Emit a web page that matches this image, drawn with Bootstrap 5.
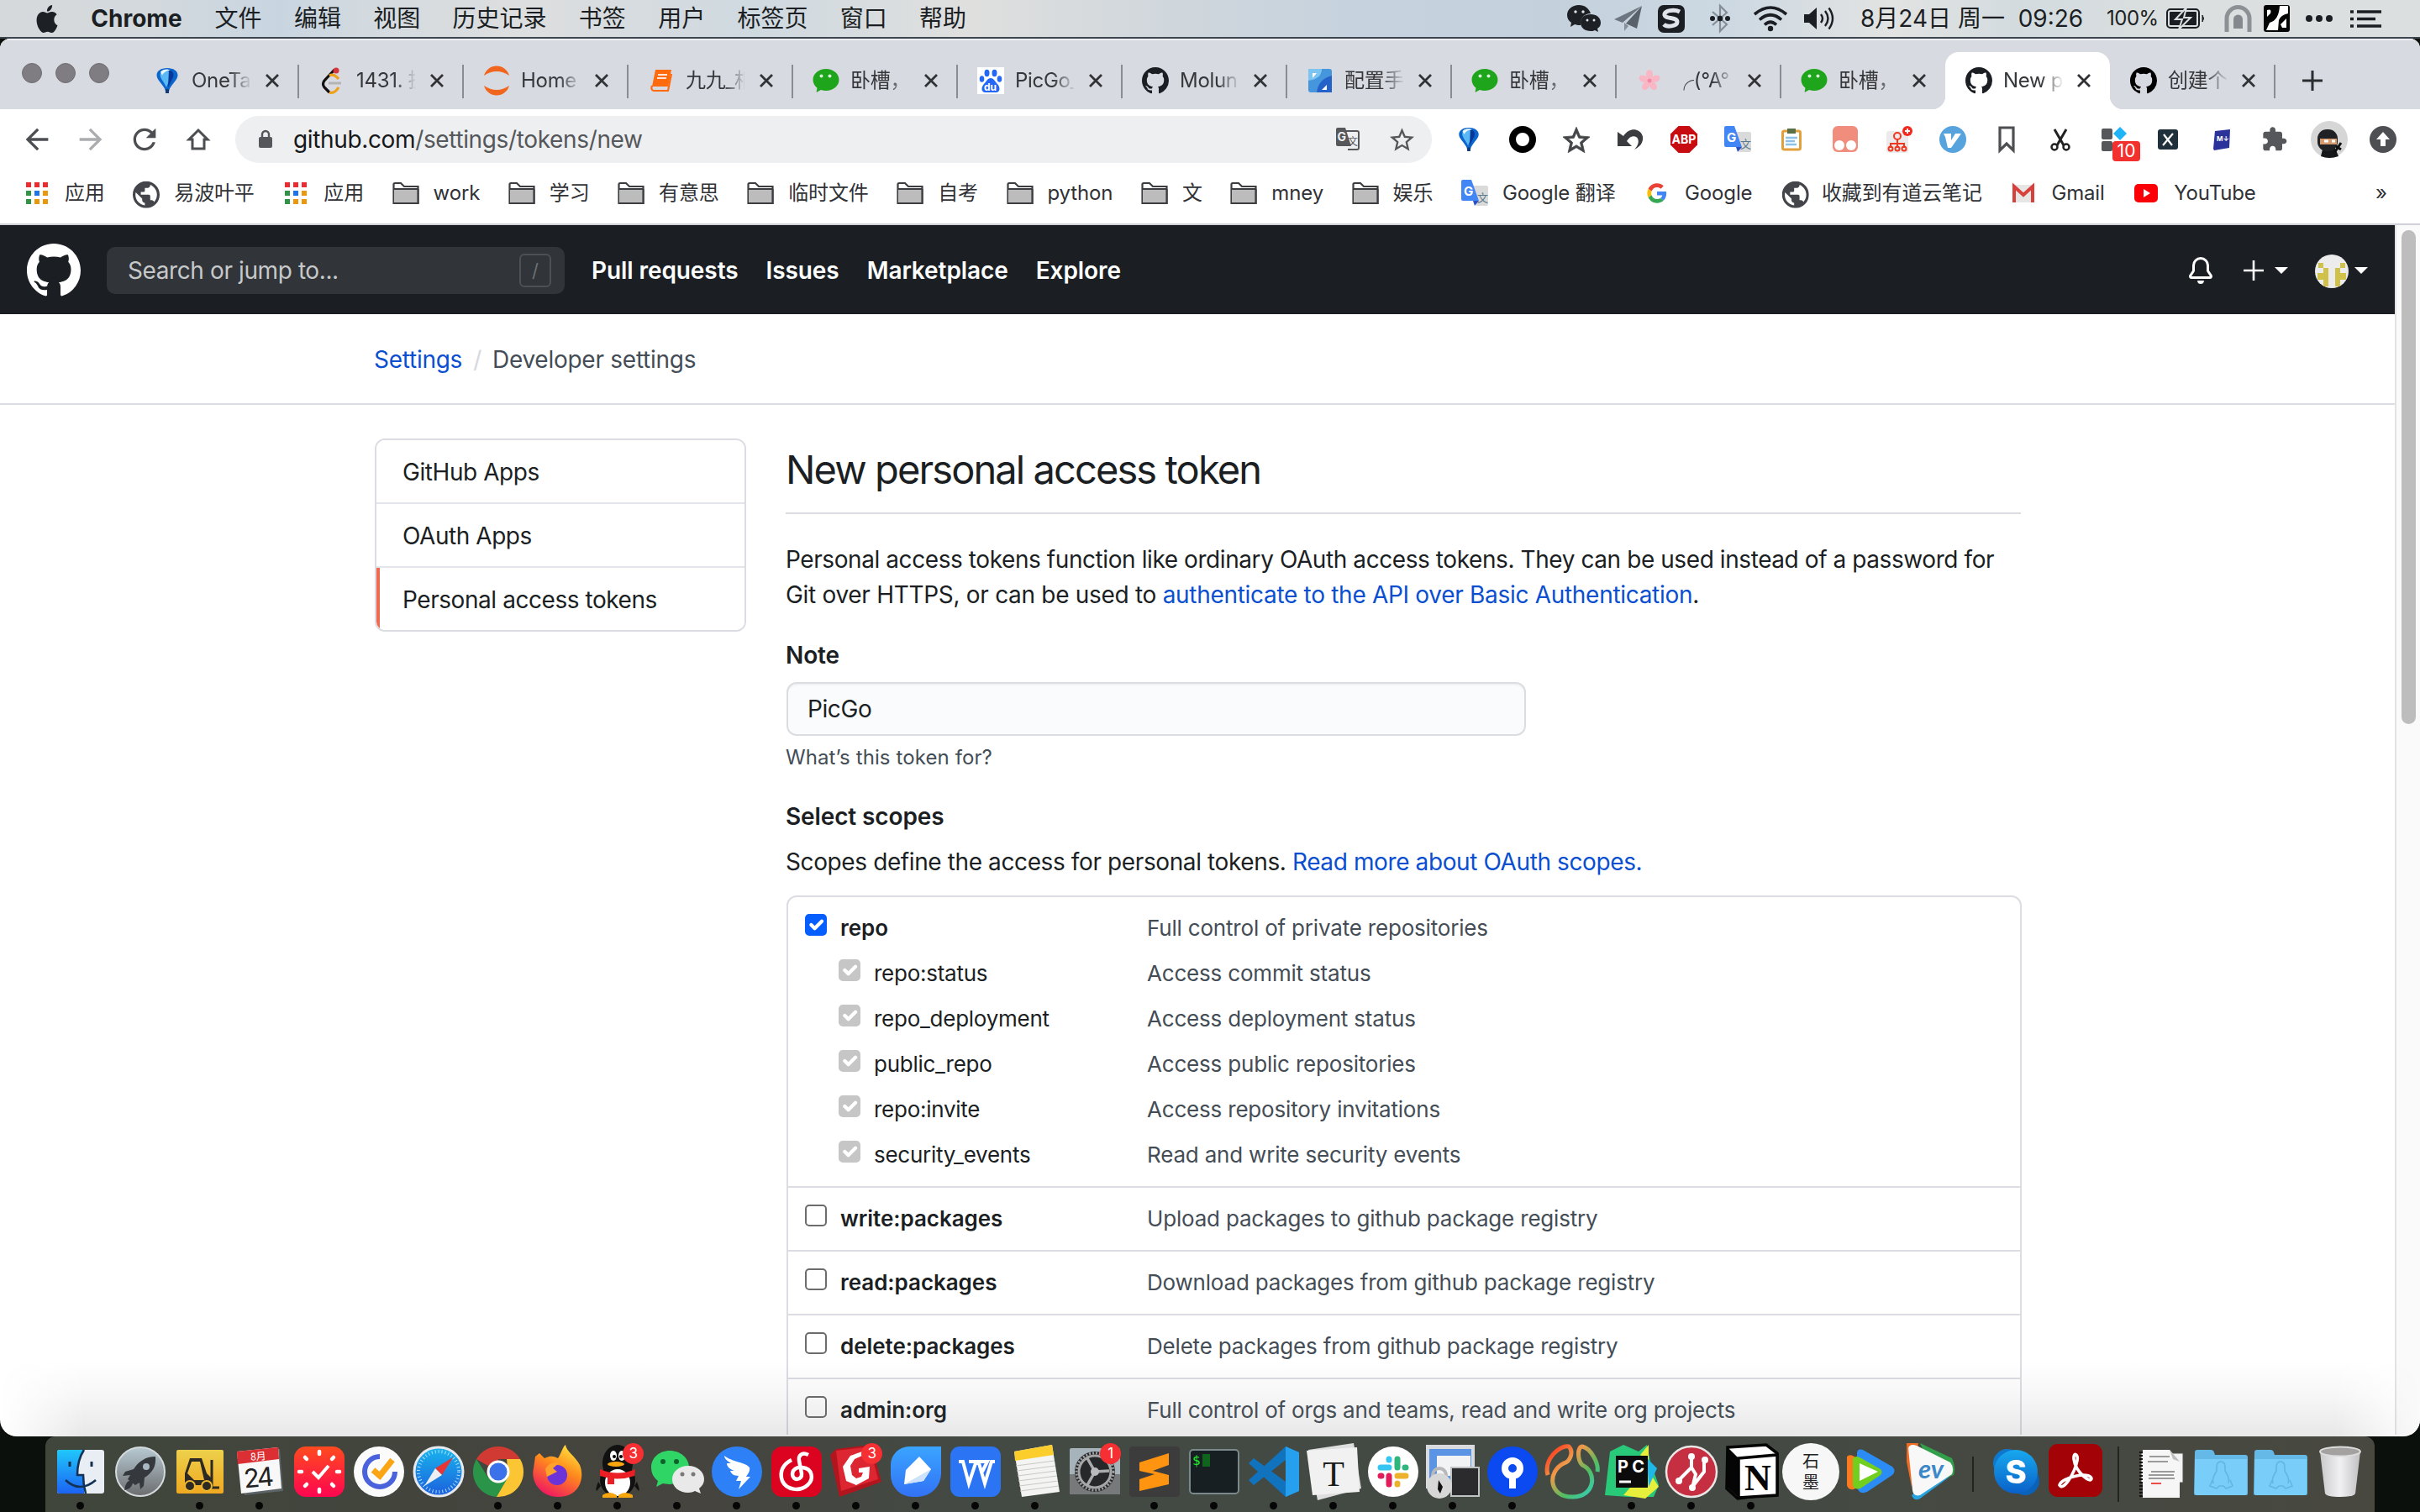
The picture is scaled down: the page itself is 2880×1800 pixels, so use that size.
<!DOCTYPE html>
<html lang="zh-CN">
<head>
<meta charset="utf-8">
<title>New personal access token</title>
<link href="https://cdn.jsdelivr.net/npm/bootstrap@5.3.0/dist/css/bootstrap.min.css" rel="stylesheet">
<style>
html,body{width:2880px;height:1800px;overflow:hidden}
body{font-family:Inter,"Noto Sans CJK SC",sans-serif;font-size:28px;line-height:42px;color:#1b1f23;background:#0b100d}
svg{display:block;flex:none;overflow:visible}
a{text-decoration:none;color:#0a4fd0}
.desktop{width:2880px;height:1800px}
/* system menu bar */
.sysbar{height:46px;padding-bottom:0;background:linear-gradient(90deg,#d6d9db 0,#d3d9dd 180px,#c8d5e0 330px,#d3dadf 440px,#dddedf 620px,#cfd9e0 900px,#dfdfde 1150px,#d2d8dc 1350px,#c6d2dd 1600px,#c4d0db 1850px,#ccd8e2 2050px,#e2e3e2 2250px,#d3dbdf 2400px,#dbdfdf 2600px,#dcdfe0 100%);border-bottom:2px solid #3d464f;white-space:nowrap}
.sysmenu{gap:38.3px;padding-left:42px}
.sysmenu b{font-weight:700;letter-spacing:0;width:109px;margin:0}
.systray{padding-right:46px}
/* browser window */
.win{height:1664px;border-radius:12px 12px 20px 20px;overflow:hidden;background:#fff;position:relative}
.tabstrip{height:84px;background:#d8dae1;border-top:2px solid #eceef1}
.lights{width:159px;padding:27px 0 0 26px;gap:16px}
.lights i{width:24px;height:24px;border-radius:50%;background:#7f7d82;border:1px solid #706e73}
.ctab{width:196px;height:68px;margin-top:14px;padding:0 17px 0 24px;position:relative;font-size:24px;color:#35373b}
.ctab::after{content:"";position:absolute;right:-1px;top:15px;width:2px;height:40px;background:#8a8c92}
.ctab .lbl{width:70px;margin-left:13px;overflow:hidden;white-space:nowrap;letter-spacing:-.3px;-webkit-mask-image:linear-gradient(90deg,#000 45px,transparent 72px);mask-image:linear-gradient(90deg,#000 45px,transparent 72px)}
.ctab .shut{margin-left:16px}
.ctab.live{background:#fff;border-radius:16px 16px 0 0}
.ctab.live::after,.ctab.prelive::after{display:none}
.ctab.live::before{content:"";position:absolute;left:-16px;right:-16px;bottom:0;height:16px;background:radial-gradient(circle at 0 0,transparent 16px,#fff 16.5px) left/16px 16px no-repeat,radial-gradient(circle at 100% 0,transparent 16px,#fff 16.5px) right/16px 16px no-repeat}
.toolrow{height:72px;padding-left:12px}
.cell64{width:64px;height:72px;display:flex;align-items:center;justify-content:center;flex:none;position:relative}
.omni{width:1424px;height:56px;border-radius:28px;background:#eeeff1;margin-left:12px;margin-right:12px;padding:0 4px 0 28px}
.omni .addr{margin-left:25px;font-size:28px;letter-spacing:-.36px;color:#55575b}
.omni .addr span{color:#17181a}
.marks{height:66px;border-bottom:2px solid #cfd0d8;font-size:24px;color:#303236;gap:33.6px;padding-left:28px;white-space:nowrap;padding-bottom:9px}
.marks .bm{display:flex;align-items:center;gap:17px;letter-spacing:-.15px}
.marks .bm svg{width:32px;height:32px}
.badge10{position:absolute;left:30px;top:38px;width:33px;height:24px;border-radius:4px;background:#f2302e;color:#fff;font-size:21px;line-height:24px;text-align:center}
/* page */
.ghpage{width:2850px;height:1440px;overflow:hidden}
.ghtop{height:106px;background:#1b1f24;padding:2px 32px 0 32px}
.ghsearch{width:545px;height:56px;border-radius:10px;background:#313438;color:#c6c8ca;margin-left:31px;padding:0 16px 0 25px;letter-spacing:-.1px}
.ghsearch .hintword{letter-spacing:-.4px}
.slashkey{width:38px;height:40px;border:2px solid #4d5155;border-radius:6px;color:#6c7074;font-size:22px;line-height:36px;text-align:center}
.ghlinks{margin-left:32px;gap:33px;font-weight:600;color:#fff;letter-spacing:-.08px}
.caret{border:8px solid transparent;border-top-color:#fff;border-bottom:0;width:0;height:0}
.crumbs{height:108px;border-bottom:2px solid #dcdde3;padding-left:445px;padding-top:1px;letter-spacing:-.26px}
.crumbs .sl{color:#d5d8dd;margin:0 13px}
.sidemenu{width:442px;height:230px;border:2px solid #dcdde3;border-radius:12px;overflow:hidden;margin-left:446px;margin-top:40px;flex:none}
.sidemenu .list-group-item{height:76px;padding:0 0 0 31px;line-height:76px;border:0;border-bottom:2px solid #e4e5ea;border-radius:0;color:#1b1f23;letter-spacing:-.44px}
.sidemenu .list-group-item:last-child{border-bottom:0;height:74px;border-left:4px solid #ee6a50;padding-left:27px}
.maincol{width:1470px;margin-left:47px;margin-top:40px;flex:none;letter-spacing:-.3px}
.maincol h2{font-size:47px;font-weight:400;line-height:74px;height:90px;border-bottom:2px solid #dcdde3;margin:0;letter-spacing:-1.9px}
.maincol p{margin:0;white-space:nowrap}
.maincol .tightline{letter-spacing:-.42px}
.maincol .snug{letter-spacing:-.39px}
.fieldname{font-weight:600;line-height:42px;letter-spacing:-.12px}
.notebox{width:880px;height:64px;padding:0 23px;border:2px solid #dadde2;border-radius:12px;background:#fafbfc;font-size:28px;color:#1b1f23;box-shadow:inset 0 2px 0 rgba(27,31,35,.04);margin-left:1px;letter-spacing:-.4px}
.hint{font-size:24px;line-height:36px;color:#444d56;letter-spacing:.1px}
.scopebox{border:2px solid #dcdde3;border-radius:12px;height:800px;margin-left:1px;width:1470px;font-size:26px;line-height:40px;letter-spacing:-.26px}
.scopeset{height:76px;border-bottom:2px solid #dcdde3;padding:17px 0 0 20px}
.scopeset.tall{height:346px}
.scoperow{height:54px;align-items:flex-start}
.scoperow .form-check-input{width:26px;height:26px;margin:3px 16px 0 0;border:2px solid #6c6c6e;border-radius:5px;flex:none}
.scoperow .form-check-input:checked{background-color:#075eff;border-color:#075eff;background-size:128%}
.scoperow .form-check-input:disabled{opacity:1;background-color:#c6c6c6;border-color:#c6c6c6}
.scoperow .kid{padding-left:40px;opacity:1!important}
.scoperow .kid,.scoperow .top{width:407px;display:flex}
.scoperow .top{font-weight:600;letter-spacing:-.05px}
.scoperow .what{color:#444d56;letter-spacing:-.19px}
.scroller{width:30px;height:1440px;border-left:2px solid #e3e3e4;background:#fafafa;padding:6px 0 0 6px}
.scroller i{display:block;width:17px;height:588px;border-radius:9px;background:#bdbdbd}
.dockshade{position:absolute;left:0;right:0;bottom:0;height:90px;background:linear-gradient(180deg,rgba(90,90,90,0) 0,rgba(90,90,90,.05) 45%,rgba(90,90,90,.14) 100%);-webkit-mask-image:linear-gradient(90deg,transparent 0,#000 100px,#000 2780px,transparent 100%);mask-image:linear-gradient(90deg,transparent 0,#000 100px,#000 2780px,transparent 100%)}
/* dock */
.dockwrap{height:90px;background:#0b100d}
.dock{width:2772px;height:90px;margin-left:54px;padding-left:6px;border-radius:12px 12px 0 0;background:linear-gradient(90deg,#40463c,#45443e 28%,#434a43 40%,#434a43 70%,#484840)}
.app{width:71.02px;height:90px;flex:none;display:flex;flex-direction:column;align-items:center;padding-top:10px;position:relative}
.app svg{width:64px;height:64px}
.app.on::after{content:"";position:absolute;left:31px;top:78px;width:9px;height:9px;border-radius:50%;background:#060606}
.appnum{position:absolute;left:42px;top:8px;width:25px;height:25px;border-radius:50%;background:#f52f32;color:#fff;font-size:17px;line-height:25px;text-align:center}
.dsep{width:31px;height:90px;display:flex;justify-content:center;align-items:center}
.dsep i{width:2px;height:42px;background:#22241f}
.dsep i.tallsep{height:66px}
</style>
</head>
<body>
<svg width="0" height="0" class="position-absolute">
<defs>
<symbol id="gh" viewBox="0 0 16 16"><path d="M8 0C3.58 0 0 3.58 0 8c0 3.54 2.29 6.53 5.47 7.59.4.07.55-.17.55-.38 0-.19-.01-.82-.01-1.49-2.01.37-2.53-.49-2.69-.94-.09-.23-.48-.94-.82-1.13-.28-.15-.68-.52-.01-.53.63-.01 1.08.58 1.23.82.72 1.21 1.87.87 2.33.66.07-.52.28-.87.51-1.07-1.78-.2-3.64-.89-3.64-3.95 0-.87.31-1.59.82-2.15-.08-.2-.36-1.02.08-2.12 0 0 .67-.21 2.2.82.64-.18 1.32-.27 2-.27.68 0 1.36.09 2 .27 1.53-1.04 2.2-.82 2.2-.82.44 1.1.16 1.92.08 2.12.51.56.82 1.27.82 2.15 0 3.07-1.87 3.75-3.65 3.95.29.25.54.73.54 1.48 0 1.07-.01 1.93-.01 2.2 0 .21.15.46.55.38A8.013 8.013 0 0016 8c0-4.42-3.58-8-8-8z"/></symbol>
<symbol id="x" viewBox="0 0 20 20"><path d="M3 3l14 14M17 3L3 17" stroke="#303236" stroke-width="2.8"/></symbol>
<symbol id="wx" viewBox="0 0 32 32"><path d="M16 2C7.5 2 0.5 7.6 0.5 15c0 4 2 7.300 5 9.700L4.500 30l5.500-3c2 .6 4 .9 6 .9 8.500 0 15.500-5.600 15.500-13S24.500 2 16 2z" fill="#1fa51b"/><circle cx="10.500" cy="10.500" r="2" fill="#d8f2d6"/><circle cx="20.500" cy="10.500" r="2" fill="#d8f2d6"/></symbol>
<symbol id="folder" viewBox="0 0 32 32"><path d="M1.500 28V5.500Q1.500 4 3 4H10L14 8H30.500V28Z" fill="#fff" stroke="#3c3d40" stroke-width="2.200"/><path d="M2 12h28v15.500H2z" fill="#bcbcbc"/><path d="M1 11h30" stroke="#3c3d40" stroke-width="2"/><path d="M1.500 28h29V11" stroke="#3c3d40" stroke-width="2.200" fill="none"/></symbol>
<symbol id="grid9" viewBox="0 0 32 32"><g fill="#ee2a2e"><path d="M3 3h6v6H3zM13 3h6v6h-6zM23 3h6v6h-6z"/></g><g fill="#2f9446"><path d="M3 13h6v6H3zM3 23h6v6H3z"/></g><path fill="#1c73ee" d="M13 13h6v6h-6z"/><path fill="#eb970b" d="M23 13h6v6h-6zM13 23h6v6h-6zM23 23h6v6h-6z"/></symbol>
<symbol id="globe" viewBox="2 2 20 20"><path fill="#43454a" d="M12 2C6.480 2 2 6.480 2 12s4.480 10 10 10 10-4.480 10-10S17.520 2 12 2zm-1 17.930c-3.950-.49-7-3.850-7-7.930 0-.62.08-1.210.21-1.790L9 15v1c0 1.100.9 2 2 2v1.930zm6.900-2.540c-.26-.81-1-1.390-1.900-1.390h-1v-3c0-.55-.45-1-1-1H8v-2h2c.55 0 1-.45 1-1V7h2c1.100 0 2-.9 2-2v-.41c2.930 1.190 5 4.060 5 7.410 0 2.080-.8 3.970-2.100 5.390z"/></symbol>
<symbol id="balloon" viewBox="0 0 32 32"><path d="M16 1C8.500 1 3.500 4.500 3.500 9.500c0 5 5.500 9 9.500 16l1.500 5h3l1.500-5c4-7 9.500-11 9.500-16C28.500 4.500 23.500 1 16 1z" fill="#0b65cd"/><path d="M8 7c3-4.500 10-4.500 11 0 1 6-1.500 11-4 17C12 17 6 12 8 7z" fill="#5ab8f5"/><path d="M18 3c6 1.500 7 7 3.500 12L17 24z" fill="#08389a"/><path d="M14 26h4v5h-4z" fill="#123a78"/><path d="M8 5.500C11 2 17 1.500 20 4c-4-.5-8 1.500-10 5.500z" fill="#eaf7ff"/></symbol>
<symbol id="gtr" viewBox="0 0 32 32"><path d="M13 7h17q2 0 2 2v20q0 2-2 2H18z" fill="#dadada"/><text x="19" y="26" font-size="13" fill="#5a7a8c" font-family="Noto Sans CJK SC">文</text><path d="M2 0h10l9 25H2q-2 0-2-2V2q0-2 2-2z" fill="#4285f4"/><path d="M21 25l-5 6-2-6z" fill="#2b4fc0"/><text x="3" y="19" font-size="15" font-weight="700" fill="#fff" font-family="Inter">G</text></symbol>
<symbol id="star" viewBox="2 2 20 19"><path d="M22 9.240l-7.190-.62L12 2 9.190 8.630 2 9.240l5.460 4.730L5.820 21 12 17.270 18.180 21l-1.630-7.030L22 9.240zM12 15.400l-3.760 2.270 1-4.280-3.320-2.880 4.380-.38L12 6.100l1.710 4.040 4.380.38-3.320 2.880 1 4.280L12 15.400z"/></symbol>
<symbol id="dirs" viewBox="0 0 64 64"><path d="M1 9q0-3 3-3h16q3 0 4 3l1 3h36q3 0 3 3v43q0 2-2 2H2q-2 0-2-2z" fill="#64b9e6"/><path d="M1 17h62v40q0 3-3 3H4q-3 0-3-3z" fill="#78cdf9"/><path d="M32 20c-6 0-5 7-5 11-3 5-6 10-4 15M32 20c6 0 5 7 5 11 3 5 6 10 4 15M22 42l-3 7 8 3 3-3h5l3 3 8-3-3-7" fill="none" stroke="#62b6e2" stroke-width="1.600"/></symbol>
<linearGradient id="gfin" x1="0" y1="0" x2="0" y2="1"><stop offset="0" stop-color="#20c7fb"/><stop offset="1" stop-color="#1c63f3"/></linearGradient>
<linearGradient id="gros" x1="0" y1="0" x2="0" y2="1"><stop offset="0" stop-color="#b7c9d2"/><stop offset="1" stop-color="#6c6d6e"/></linearGradient>
<linearGradient id="gtom" x1="0" y1="0" x2="0" y2="1"><stop offset="0" stop-color="#ff4a1f"/><stop offset="1" stop-color="#ff0650"/></linearGradient>
<linearGradient id="gsaf" x1="0" y1="0" x2="0" y2="1"><stop offset="0" stop-color="#18b5ee"/><stop offset="1" stop-color="#1c5fdc"/></linearGradient>
<linearGradient id="gfox" x1=".8" y1="0" x2=".3" y2="1"><stop offset="0" stop-color="#ffe83e"/><stop offset=".45" stop-color="#ff8a1c"/><stop offset="1" stop-color="#f01462"/></linearGradient>
<linearGradient id="gyel" x1="0" y1="0" x2="0" y2="1"><stop offset="0" stop-color="#edd04b"/><stop offset="1" stop-color="#f0a821"/></linearGradient>
<linearGradient id="gblu" x1="0" y1="0" x2="0" y2="1"><stop offset="0" stop-color="#3aa4ff"/><stop offset="1" stop-color="#3272f5"/></linearGradient>
<linearGradient id="gnav" x1="0" y1="0" x2="1" y2="1"><stop offset="0" stop-color="#ff2413"/><stop offset=".35" stop-color="#ee9a4a"/><stop offset=".65" stop-color="#53bd5f"/><stop offset="1" stop-color="#2ad3d0"/></linearGradient>
<linearGradient id="gtra" x1="0" y1="0" x2="1" y2="0"><stop offset="0" stop-color="#c9c9cc"/><stop offset=".5" stop-color="#f1f1f3"/><stop offset="1" stop-color="#c0c0c3"/></linearGradient>
<linearGradient id="gsky" x1="0" y1="0" x2="0" y2="1"><stop offset="0" stop-color="#18a8ee"/><stop offset="1" stop-color="#0a61c9"/></linearGradient>
</defs></svg>

<div class="desktop d-flex flex-column">
<header class="sysbar d-flex align-items-center justify-content-between">
  <nav class="sysmenu d-flex align-items-center">
    <svg width="28" height="33" viewBox="1 0 22 24" preserveAspectRatio="none"><path fill="#1d2025" d="M12.152 6.896c-.948 0-2.415-1.078-3.960-1.040-2.040.027-3.910 1.183-4.961 3.014-2.117 3.675-.546 9.103 1.519 12.090 1.013 1.454 2.208 3.090 3.792 3.039 1.520-.065 2.090-.987 3.935-.987 1.831 0 2.350.987 3.960.948 1.637-.026 2.676-1.480 3.676-2.948 1.156-1.688 1.636-3.325 1.662-3.415-.039-.013-3.182-1.221-3.220-4.857-.026-3.040 2.480-4.494 2.597-4.559-1.429-2.090-3.623-2.324-4.390-2.376-2-.156-3.675 1.090-4.610 1.090zM15.530 3.830c.843-1.012 1.400-2.427 1.245-3.830-1.207.052-2.662.805-3.532 1.818-.78.896-1.454 2.338-1.273 3.714 1.338.104 2.715-.688 3.559-1.701"/></svg>
    <b>Chrome</b><span>文件</span><span>编辑</span><span>视图</span><span>历史记录</span><span>书签</span><span>用户</span><span>标签页</span><span>窗口</span><span>帮助</span>
  </nav>
  <div class="systray d-flex align-items-center">
    <svg width="40" height="34" viewBox="0 0 40 34"><path d="M14 1C6 1 0 6 0 13c0 4 2 7 5 9l-1 5 5-3c3 1 5 1 7 1-1-8 5-14 12-14C26 5 21 1 14 1z" fill="#1d2025"/><path d="M28 12c-7 0-12 4-12 10s5 10 12 10c2 0 3 0 5-1l4 2-1-4c3-2 4-4 4-7 0-6-5-10-12-10z" fill="#1d2025"/><g fill="#dce3e8"><circle cx="10" cy="9" r="1.700"/><circle cx="19" cy="9" r="1.700"/><circle cx="24" cy="19" r="1.500"/><circle cx="32" cy="19" r="1.500"/></g></svg>
    <svg class="ms-3" width="34" height="32" viewBox="0 0 34 32"><path d="M33 1L0 17l10 4z" fill="#6c7580"/><path d="M33 1L14 22l13 6z" fill="#59616b"/><path d="M12 21v10l5-6z" fill="#868e97"/></svg>
    <svg style="margin-left:18px" width="32" height="33" viewBox="0 0 32 33"><rect width="32" height="33" rx="7" fill="#1b1e23"/><path d="M26 8c-6-3-19-2-18 4 1 5 15 2 15 8 0 5-12 7-16 3" fill="none" stroke="#dfe5ea" stroke-width="5"/></svg>
    <svg style="margin-left:30px" width="24" height="34" viewBox="0 0 24 34"><path d="M3 9l17 15-8 8V2l8 8L3 25" fill="none" stroke="#858e97" stroke-width="2.200"/><g fill="#1b1e23"><circle cx="3" cy="17" r="3"/><circle cx="12" cy="17" r="3.300"/><circle cx="21" cy="17" r="3"/></g></svg>
    <svg style="margin-left:27px" width="42" height="30" viewBox="0 0 42 30"><g fill="none" stroke="#1b1e23" stroke-width="3.600"><path d="M2 10Q21-6 40 10"/><path d="M8 16.500Q21 5 34 16.500"/><path d="M14 22.500Q21 16 28 22.500"/></g><circle cx="21" cy="27" r="3.200" fill="#1b1e23"/></svg>
    <svg style="margin-left:19px" width="36" height="28" viewBox="0 0 36 28"><path d="M0 9h6l9-8v26l-9-8H0z" fill="#1b1e23"/><path d="M20 9q4 5 0 10M25 5q7 9 0 18M29.500 1.500q9 12.500 0 25" fill="none" stroke="#1b1e23" stroke-width="2.400"/></svg>
    <span style="margin-left:31px;width:267px;letter-spacing:0;white-space:pre">8月24日 周一  09:26</span>
    <span style="margin-left:26px;width:62px;font-size:24px;letter-spacing:-.5px">100%</span>
    <svg style="margin-left:9px" width="46" height="24" viewBox="0 0 46 24"><rect x="1" y="1" width="38" height="22" rx="4" fill="none" stroke="#1b1e23" stroke-width="2"/><rect x="4" y="4" width="32" height="16" rx="1" fill="#1b1e23"/><path d="M43 8q3 4 0 8z" fill="#1b1e23" stroke="#1b1e23"/><path d="M24-1L11 13h8l-4 12 14-14h-8z" fill="#1b1e23" stroke="#dcdfe0" stroke-width="2"/></svg>
    <svg style="margin-left:23px" width="33" height="32" viewBox="0 0 33 32"><path d="M3 32V16a13.500 13.500 0 0127 0v16" fill="none" stroke="#8d9195" stroke-width="5"/><path d="M11 28V17a5.500 5.500 0 0111 0v11z" fill="#85898d"/></svg>
    <svg style="margin-left:14px" width="31" height="32" viewBox="0 0 31 32"><rect width="31" height="32" rx="3" fill="#050505"/><path d="M19 1h10v9q-9 2-11 8l-1 12H3l4-9q11-3 12-20z" fill="#fff"/><path d="M4 6q6-2 4 4l-4 4zM20 23l7-7v11h-5z" fill="#fff"/></svg>
    <svg style="margin-left:18px" width="34" height="10" viewBox="0 0 34 10"><g fill="#1b1e23"><circle cx="5" cy="5" r="4"/><circle cx="17" cy="5" r="4"/><circle cx="29" cy="5" r="4"/></g></svg>
    <svg style="margin-left:20px" width="37" height="21" viewBox="0 0 37 21"><path d="M0 2h4M8 2h29M0 10.500h4M8 10.500h22M0 19h4M8 19h29" stroke="#1b1e23" stroke-width="3.600"/></svg>
  </div>
</header>

<main class="win flex-shrink-0">
  <div class="tabstrip d-flex">
    <div class="lights d-flex"><i></i><i></i><i></i></div>
    <div class="ctab d-flex align-items-center"><svg width="32" height="32"><use href="#balloon"/></svg><span class="lbl">OneTab</span><svg class="shut" width="20" height="20"><use href="#x"/></svg></div>
    <div class="ctab d-flex align-items-center"><svg width="32" height="32" viewBox="0 0 32 32"><path d="M19 3L7 16q-3 4 0 8l6 6" fill="none" stroke="#111" stroke-width="3.200"/><path d="M13 10q5-3 11 4M13 30q6 2 11-6" fill="none" stroke="#f0a11c" stroke-width="3.200"/><path d="M12 19h15" stroke="#b4b4b4" stroke-width="3.200"/><circle cx="21" cy="4" r="3.500" fill="#d6353a"/></svg><span class="lbl">1431. 拥</span><svg class="shut" width="20" height="20"><use href="#x"/></svg></div>
    <div class="ctab d-flex align-items-center"><svg width="32" height="32" viewBox="0 0 32 32"><path d="M1 10A15.500 15.500 0 0131 10Q16 0 1 10zM1 22A15.500 15.500 0 0031 22Q16 32 1 22z" fill="#f1661f"/></svg><span class="lbl">Home</span><svg class="shut" width="20" height="20"><use href="#x"/></svg></div>
    <div class="ctab d-flex align-items-center"><svg width="32" height="32" viewBox="0 0 32 32"><path d="M9 3h19l-4 20H5z" fill="#ff6a0d"/><path d="M12 9h11M11 13h11" stroke="#ffe6d6" stroke-width="2"/><path d="M5 22q-2 5 2 6h17l4-20" fill="none" stroke="#ff6a0d" stroke-width="2.200"/></svg><span class="lbl">九九_相</span><svg class="shut" width="20" height="20"><use href="#x"/></svg></div>
    <div class="ctab d-flex align-items-center"><svg width="32" height="32"><use href="#wx"/></svg><span class="lbl">卧槽，</span><svg class="shut" width="20" height="20"><use href="#x"/></svg></div>
    <div class="ctab d-flex align-items-center"><svg width="32" height="32" viewBox="0 0 32 32"><path fill="#fff" d="M0 0h32v32H0z"/><g fill="#2568f5"><ellipse cx="11.500" cy="7" rx="3" ry="4.200"/><ellipse cx="20.500" cy="7" rx="3" ry="4.200"/><ellipse cx="5.500" cy="14" rx="2.800" ry="3.800"/><ellipse cx="26.500" cy="14" rx="2.800" ry="3.800"/><path d="M16 13c-4 0-5 4-8 7s-4 9 1 10c4 0 10 0 14 0 5-1 4-7 1-10s-4-7-8-7z"/></g><text x="8" y="28" font-size="12" font-weight="700" fill="#fff" font-family="Inter">du</text></svg><span class="lbl">PicGo_</span><svg class="shut" width="20" height="20"><use href="#x"/></svg></div>
    <div class="ctab d-flex align-items-center"><svg width="32" height="32" fill="#1b1f23"><use href="#gh"/></svg><span class="lbl">Molun</span><svg class="shut" width="20" height="20"><use href="#x"/></svg></div>
    <div class="ctab d-flex align-items-center"><svg width="32" height="32" viewBox="0 0 32 32"><rect x="2" y="2" width="28" height="28" rx="3" fill="#4596dc"/><path d="M2 16Q18 14 18 2H2z" fill="#7cc4f1"/><path d="M30 10Q14 14 12 30h18z" fill="#2461c8"/><path d="M7 7h5l-5 6zM24 21v6h-6z" fill="#fff"/></svg><span class="lbl">配置手</span><svg class="shut" width="20" height="20"><use href="#x"/></svg></div>
    <div class="ctab d-flex align-items-center"><svg width="32" height="32"><use href="#wx"/></svg><span class="lbl">卧槽，</span><svg class="shut" width="20" height="20"><use href="#x"/></svg></div>
    <div class="ctab d-flex align-items-center"><svg width="32" height="32" viewBox="0 0 32 32"><g fill="#f9b7c6"><ellipse cx="16" cy="8.500" rx="4" ry="5.500"/><ellipse cx="16" cy="8.500" rx="4" ry="5.500" transform="rotate(72 16 16)"/><ellipse cx="16" cy="8.500" rx="4" ry="5.500" transform="rotate(144 16 16)"/><ellipse cx="16" cy="8.500" rx="4" ry="5.500" transform="rotate(216 16 16)"/><ellipse cx="16" cy="8.500" rx="4" ry="5.500" transform="rotate(288 16 16)"/></g><circle cx="16" cy="16" r="2.500" fill="#f48aa2"/></svg><span class="lbl">╭(°A°</span><svg class="shut" width="20" height="20"><use href="#x"/></svg></div>
    <div class="ctab prelive d-flex align-items-center"><svg width="32" height="32"><use href="#wx"/></svg><span class="lbl">卧槽，</span><svg class="shut" width="20" height="20"><use href="#x"/></svg></div>
    <div class="ctab live d-flex align-items-center"><svg width="32" height="32" fill="#1b1f23"><use href="#gh"/></svg><span class="lbl">New p</span><svg class="shut" width="20" height="20"><use href="#x"/></svg></div>
    <div class="ctab d-flex align-items-center"><svg width="32" height="32" fill="#000"><use href="#gh"/></svg><span class="lbl">创建个</span><svg class="shut" width="20" height="20"><use href="#x"/></svg></div>
    <svg class="align-self-center ms-4" style="margin-top:14px" width="48" height="24" viewBox="0 0 48 24"><path d="M9 12h24M21 0v24" stroke="#2b2d31" stroke-width="3"/></svg>
  </div>

  <div class="toolrow d-flex align-items-center">
    <div class="cell64"><svg width="40" height="40" viewBox="0 0 24 24"><path fill="#4c4e52" d="M20 11H7.830l5.590-5.590L12 4l-8 8 8 8 1.410-1.410L7.830 13H20v-2z"/></svg></div>
    <div class="cell64"><svg width="40" height="40" viewBox="0 0 24 24"><path fill="#aaacaf" d="M4 13h12.170l-5.590 5.590L12 20l8-8-8-8-1.410 1.410L16.170 11H4z"/></svg></div>
    <div class="cell64"><svg width="40" height="40" viewBox="0 0 24 24"><path fill="#4c4e52" d="M17.650 6.350C16.200 4.900 14.210 4 12 4c-4.420 0-7.990 3.580-7.990 8s3.570 8 7.990 8c3.730 0 6.840-2.550 7.730-6h-2.080c-.82 2.330-3.040 4-5.650 4-3.310 0-6-2.690-6-6s2.690-6 6-6c1.660 0 3.140.69 4.220 1.780L13 11h7V4l-2.350 2.350z"/></svg></div>
    <div class="cell64"><svg width="28" height="28" viewBox="0 0 28 28"><path d="M14 3L3 14h4v11h14V14h4z" fill="none" stroke="#4c4e52" stroke-width="3"/></svg></div>
    <div class="omni d-flex align-items-center">
      <svg width="16" height="22" viewBox="0 0 16 22"><rect y="8" width="16" height="13" rx="2" fill="#55575b"/><path d="M4 9V5a4 4 0 018 0v4" fill="none" stroke="#55575b" stroke-width="2.400"/></svg>
      <div class="addr me-auto"><span>github.com</span>/settings/tokens/new</div>
      <div class="cell64"><svg width="30" height="30" viewBox="0 0 30 30"><path d="M12 5h14q2 0 2 2v18q0 2-2 2H15" fill="none" stroke="#55575b" stroke-width="2"/><text x="15" y="22" font-size="12" fill="#55575b" font-family="Noto Sans CJK SC">文</text><path d="M3 1h9l7 22H3q-2 0-2-2V3q0-2 2-2z" fill="#55575b"/><text x="2.500" y="17" font-size="14" font-weight="700" fill="#eeeff1" font-family="Inter">G</text></svg></div>
      <div class="cell64"><svg width="29" height="28" fill="#55575b"><use href="#star"/></svg></div>
    </div>
    <div class="cell64"><svg width="32" height="30"><use href="#balloon"/></svg></div>
    <div class="cell64"><svg width="32" height="32"><circle cx="16" cy="16" r="12" fill="none" stroke="#000" stroke-width="8"/></svg></div>
    <div class="cell64"><svg width="32" height="31" fill="#444649" stroke="#444649" stroke-width=".5"><use href="#star"/></svg></div>
    <div class="cell64"><svg width="32" height="28" viewBox="0 0 32 28"><path d="M1 5v17h17l-6-6c4-7 11-7 13-3s0 9-4 13c9-4 12-12 9-18S16-2 8 10z" fill="#3b3c3f"/></svg></div>
    <div class="cell64"><svg width="32" height="32" viewBox="0 0 32 32"><path d="M9.500 0h13L32 9.500v13L22.500 32h-13L0 22.500v-13z" fill="#c70d12"/><text x="16" y="21" text-anchor="middle" font-size="14" font-weight="700" textLength="29" lengthAdjust="spacingAndGlyphs" fill="#fff" font-family="Inter">ABP</text></svg></div>
    <div class="cell64"><svg width="32" height="32"><use href="#gtr"/></svg></div>
    <div class="cell64"><svg width="24" height="26" viewBox="0 0 24 26"><rect x="1.500" y="3" width="21" height="22" rx="2" fill="#fff" stroke="#e2a03c" stroke-width="3"/><rect x="7" width="10" height="6" fill="#5a7048"/><path d="M5 11h14M5 15h11M5 19h13" stroke="#8cc1e8" stroke-width="2.500"/></svg></div>
    <div class="cell64"><svg width="30" height="32" viewBox="0 0 30 32"><rect width="30" height="31" rx="6" fill="#f08d7d"/><circle cx="8" cy="23" r="6" fill="#fff"/><circle cx="22" cy="23" r="6" fill="#fff"/></svg></div>
    <div class="cell64"><svg width="32" height="32" viewBox="0 0 32 32"><rect x="1" y="6" width="26" height="26" rx="3" fill="#eceaea"/><g fill="none" stroke="#f1371f" stroke-width="2"><circle cx="14" cy="12" r="4"/><path d="M14 16v10M6 26v-5h16v5"/><circle cx="6" cy="27" r="2.500"/><circle cx="14" cy="27" r="2.500"/><circle cx="22" cy="27" r="2.500"/></g><circle cx="26" cy="6" r="6" fill="#f5281e"/><path d="M23 6h6M26 3v6" stroke="#fff" stroke-width="2"/></svg></div>
    <div class="cell64"><svg width="32" height="32" viewBox="0 0 32 32"><circle cx="16" cy="16" r="16" fill="#56a3de"/><path d="M5 9h9l0 8 5-8h7L14 26h-4L7 13z" fill="#fff"/></svg></div>
    <div class="cell64"><svg width="22" height="32" viewBox="0 0 22 32"><path d="M3 2h16v27l-8-8-8 8z" fill="none" stroke="#4e4f52" stroke-width="3.200"/></svg></div>
    <div class="cell64"><svg width="24" height="28" viewBox="0 0 24 28"><path d="M5 2l11 19M19 2L8 21" stroke="#222" stroke-width="3"/><circle cx="5" cy="23" r="3.500" fill="none" stroke="#222" stroke-width="2.500"/><circle cx="19" cy="23" r="3.500" fill="none" stroke="#222" stroke-width="2.500"/></svg></div>
    <div class="cell64"><svg width="32" height="30" viewBox="0 0 32 30"><rect x="1" y="2" width="13" height="13" rx="2" fill="#55575b"/><rect x="1" y="17" width="13" height="12" rx="2" fill="#55575b"/><path d="M23 0l8 8-8 8-8-8z" fill="#1fb4f7"/></svg><span class="badge10">10</span></div>
    <div class="cell64"><svg width="24" height="24" viewBox="0 0 24 24"><rect width="24" height="24" rx="3" fill="#20313b"/><path d="M7 6l10 13M18 5L6 19" stroke="#fff" stroke-width="2.200"/></svg></div>
    <div class="cell64"><svg width="20" height="25" viewBox="0 0 20 25"><path d="M2 2l18-2-1 22-18 3-1-2z" fill="#2b339b"/><text x="4" y="14" font-size="8" font-weight="700" fill="#fff" font-family="Inter">M↓</text></svg></div>
    <div class="cell64"><svg width="32" height="32" viewBox="1 0 24 24"><path fill="#55575b" d="M20.500 11H19V7c0-1.100-.9-2-2-2h-4V3.500C13 2.120 11.880 1 10.500 1S8 2.120 8 3.500V5H4c-1.100 0-1.990.9-1.990 2v3.800H3.500c1.490 0 2.700 1.210 2.700 2.700s-1.210 2.700-2.700 2.700H2V20c0 1.100.9 2 2 2h3.800v-1.500c0-1.490 1.210-2.700 2.700-2.700 1.490 0 2.700 1.210 2.700 2.700V22H17c1.100 0 2-.9 2-2v-4h1.500c1.380 0 2.500-1.120 2.500-2.500S21.880 11 20.500 11z"/></svg></div>
    <div class="cell64"><svg width="44" height="44" viewBox="0 0 44 44"><circle cx="22" cy="22" r="22" fill="#d6d6d6"/><path d="M12 42l3-12h13l5 12q-11 4-21 0z" fill="#15171a"/><rect x="8" y="10" width="24" height="26" rx="11" fill="#1f2124"/><path d="M11 21h20v7H11z" fill="#d69a6c"/><path d="M16 24h5M25 24h4" stroke="#fff" stroke-width="3"/><path d="M36 26l-8 12M30 30l6 4" stroke="#111" stroke-width="3"/></svg></div>
    <div class="cell64"><svg width="32" height="32" viewBox="0 0 32 32"><circle cx="16" cy="16" r="16" fill="#4e4f52"/><path d="M16 7l-8 9h5v8h6v-8h5z" fill="#fff"/></svg></div>
  </div>

  <div class="marks d-flex align-items-center">
    <span class="bm"><svg><use href="#grid9"/></svg>应用</span>
    <span class="bm"><svg viewBox="0 -2 36 36"><use href="#globe"/></svg>易波叶平</span>
    <span class="bm"><svg><use href="#grid9"/></svg>应用</span>
    <span class="bm"><svg><use href="#folder"/></svg>work</span>
    <span class="bm"><svg><use href="#folder"/></svg>学习</span>
    <span class="bm"><svg><use href="#folder"/></svg>有意思</span>
    <span class="bm"><svg><use href="#folder"/></svg>临时文件</span>
    <span class="bm"><svg><use href="#folder"/></svg>自考</span>
    <span class="bm"><svg><use href="#folder"/></svg>python</span>
    <span class="bm"><svg><use href="#folder"/></svg>文</span>
    <span class="bm"><svg><use href="#folder"/></svg>mney</span>
    <span class="bm"><svg><use href="#folder"/></svg>娱乐</span>
    <span class="bm"><svg><use href="#gtr"/></svg>Google 翻译</span>
    <span class="bm"><svg viewBox="-9 -9 66 66"><path fill="#ea4335" d="M24 9.500c3.540 0 6.710 1.220 9.210 3.600l6.850-6.850C35.900 2.380 30.470 0 24 0 14.620 0 6.510 5.380 2.560 13.220l7.980 6.190C12.430 13.720 17.740 9.500 24 9.500z"/><path fill="#4285f4" d="M46.980 24.550c0-1.570-.15-3.090-.38-4.550H24v9.020h12.940c-.58 2.960-2.260 5.480-4.780 7.180l7.730 6c4.510-4.180 7.090-10.360 7.090-17.650z"/><path fill="#fbbc05" d="M10.530 28.590c-.48-1.450-.76-2.990-.76-4.590s.27-3.140.76-4.590l-7.980-6.190C.92 16.460 0 20.120 0 24c0 3.880.92 7.540 2.560 10.780l7.970-6.190z"/><path fill="#34a853" d="M24 48c6.480 0 11.930-2.130 15.890-5.810l-7.730-6c-2.150 1.450-4.920 2.300-8.160 2.300-6.260 0-11.570-4.220-13.470-9.910l-7.980 6.190C6.510 42.620 14.620 48 24 48z"/></svg>Google</span>
    <span class="bm"><svg viewBox="-2 -2 36 36"><use href="#globe"/></svg>收藏到有道云笔记</span>
    <span class="bm"><svg viewBox="0 0 32 32"><path d="M3 6h26v21H3z" fill="#e6e6e6"/><path d="M5 27V8l11 10L27 8v19" fill="none" stroke="#d8413b" stroke-width="4"/></svg>Gmail</span>
    <span class="bm"><svg viewBox="0 0 32 32"><rect x="2" y="5" width="28" height="22" rx="5" fill="#fb0007"/><path d="M13 11l8 5-8 5z" fill="#fff"/></svg>YouTube</span>
    <span class="ms-auto" style="margin-right:39px">»</span>
  </div>

  <div class="d-flex">
    <div class="ghpage">
      <div class="ghtop navbar-dark d-flex align-items-center">
        <svg width="64" height="64" fill="#fff"><use href="#gh"/></svg>
        <div class="ghsearch d-flex align-items-center justify-content-between"><span class="hintword">Search or jump to...</span><span class="slashkey">/</span></div>
        <nav class="ghlinks d-flex"><span>Pull requests</span><span>Issues</span><span>Marketplace</span><span>Explore</span></nav>
        <svg class="ms-auto" width="32" height="34" viewBox="0 0 16 16" fill="#fff"><path d="M8 16a2 2 0 001.985-1.750c.017-.137-.097-.25-.235-.25h-3.500c-.138 0-.252.113-.235.25A2 2 0 008 16z"/><path fill-rule="evenodd" d="M8 1.500A3.500 3.500 0 004.500 5v2.947c0 .346-.102.683-.294.97l-1.703 2.556a.018.018 0 00-.003.01l.001.006.004.006.006.004.007.001h10.964l.007-.001.006-.004.004-.006.001-.007a.017.017 0 00-.003-.01l-1.703-2.554a1.750 1.750 0 01-.294-.97V5A3.500 3.500 0 008 1.500zM3 5a5 5 0 0110 0v2.947c0 .05.015.098.042.139l1.703 2.555A1.518 1.518 0 0113.482 13H2.518a1.518 1.518 0 01-1.263-2.360l1.703-2.554A.25.25 0 003 7.947V5z"/></svg>
        <svg style="margin-left:35px" width="24" height="24"><path d="M0 12h24M12 0v24" stroke="#fff" stroke-width="2.600"/></svg>
        <i class="caret" style="margin-left:13px"></i>
        <svg style="margin-left:32px;margin-top:2px" width="40" height="40" viewBox="0 0 40 40"><circle cx="20" cy="20" r="20" fill="#ececec"/><path d="M4 10h6v6h6v22h-6v-8H3v-8h7v-6H4zM36 10h-6v6h-6v22h6v-8h7v-8h-7v-6h6z" fill="#d0c14a"/></svg>
        <i class="caret" style="margin-left:7px"></i>
      </div>
      <div class="crumbs d-flex align-items-center"><a href="#">Settings</a><span class="sl">/</span><span style="color:#444d56">Developer settings</span></div>
      <div class="d-flex align-items-start">
        <div class="list-group sidemenu">
          <a class="list-group-item" href="#">GitHub Apps</a>
          <a class="list-group-item" href="#">OAuth Apps</a>
          <a class="list-group-item" href="#">Personal access tokens</a>
        </div>
        <div class="maincol">
          <h2>New personal access token</h2>
          <p style="margin-top:33px"><span class="tightline">Personal access tokens function like ordinary OAuth access tokens. They can be used instead of a password for</span><br>Git over HTTPS, or can be used to <a href="#">authenticate to the API over Basic Authentication</a>.</p>
          <div class="fieldname" style="margin-top:30px;margin-bottom:11px">Note</div>
          <input class="form-control notebox" value="PicGo">
          <div class="hint" style="margin-top:8px">What’s this token for?</div>
          <div class="fieldname" style="margin-top:31px">Select scopes</div>
          <p class="snug" style="margin-top:12px;margin-bottom:19px">Scopes define the access for personal tokens. <a href="#">Read more about OAuth scopes.</a></p>
          <div class="scopebox">
            <div class="scopeset tall">
              <div class="scoperow d-flex"><label class="top"><input type="checkbox" class="form-check-input" checked>repo</label><span class="what">Full control of private repositories</span></div>
              <div class="scoperow d-flex"><label class="kid"><input type="checkbox" class="form-check-input" checked disabled>repo:status</label><span class="what">Access commit status</span></div>
              <div class="scoperow d-flex"><label class="kid"><input type="checkbox" class="form-check-input" checked disabled>repo_deployment</label><span class="what">Access deployment status</span></div>
              <div class="scoperow d-flex"><label class="kid"><input type="checkbox" class="form-check-input" checked disabled>public_repo</label><span class="what">Access public repositories</span></div>
              <div class="scoperow d-flex"><label class="kid"><input type="checkbox" class="form-check-input" checked disabled>repo:invite</label><span class="what">Access repository invitations</span></div>
              <div class="scoperow d-flex"><label class="kid"><input type="checkbox" class="form-check-input" checked disabled>security_events</label><span class="what">Read and write security events</span></div>
            </div>
            <div class="scopeset"><div class="scoperow d-flex"><label class="top"><input type="checkbox" class="form-check-input">write:packages</label><span class="what">Upload packages to github package registry</span></div></div>
            <div class="scopeset"><div class="scoperow d-flex"><label class="top"><input type="checkbox" class="form-check-input">read:packages</label><span class="what">Download packages from github package registry</span></div></div>
            <div class="scopeset"><div class="scoperow d-flex"><label class="top"><input type="checkbox" class="form-check-input">delete:packages</label><span class="what">Delete packages from github package registry</span></div></div>
            <div class="scopeset"><div class="scoperow d-flex"><label class="top"><input type="checkbox" class="form-check-input">admin:org</label><span class="what">Full control of orgs and teams, read and write org projects</span></div></div>
          </div>
        </div>
      </div>
    </div>
    <div class="scroller"><i></i></div>
  </div>
  <div class="dockshade"></div>
</main>

<footer class="dockwrap">
<div class="dock d-flex">
  <div class="app on"><svg viewBox="0 0 64 64"><rect x="4" y="6" width="56" height="52" rx="3" fill="#e9eef4"/><path d="M7 6h29c-6 9-8 18-8 30h8v22H7q-3 0-3-3V9q0-3 3-3z" fill="url(#gfin)"/><path d="M36 6c-6 9-8 18-8 30h7c0 8 1 15 3 22M14 42q17 16 36 0" fill="none" stroke="#143255" stroke-width="2.600"/><path d="M19 20v6M45 20v6" stroke="#14304f" stroke-width="3"/></svg></div>
  <div class="app"><svg viewBox="0 0 64 64"><circle cx="32" cy="32" r="29" fill="url(#gros)" stroke="#d3d9dc" stroke-width="2"/><path d="M50 14c-12 0-20 6-26 15l-10 3-3 5 9-1-3 5 9 7 5-3 1 8 4-4 1-10c10-6 14-14 13-25zM20 42c-5 2-6 7-7 12 5-1 9-3 10-9z" fill="#35393d"/><circle cx="39" cy="26" r="4" fill="#a9b8c0"/></svg></div>
  <div class="app on"><svg viewBox="0 0 64 64"><rect x="4" y="6" width="56" height="52" rx="2" fill="url(#gyel)"/><path d="M14 44V34l6-18h14l6 18 6 6v8H14zM22 20l-5 14 8 8h12l-5-22z" fill="#2c2a22" fill-rule="evenodd"/><path d="M46 18v33h9" stroke="#2c2a22" stroke-width="3" fill="none"/><g fill="#2c2a22" stroke="#eeb52f" stroke-width="2"><circle cx="20" cy="49" r="6"/><circle cx="40" cy="49" r="6"/></g></svg></div>
  <div class="app on"><svg viewBox="0 0 64 64"><path d="M6 8l50-3 4 50-46 5z" fill="#5c6468"/><path d="M5 8l49-5 4 49-48 6z" fill="#f8f8f8"/><path d="M5 8l49-5 1 14-49 6z" fill="#dc2f33"/><text x="21" y="18" font-size="12" fill="#fff" font-family="Noto Sans CJK SC" transform="rotate(-5 30 14)">8月</text><text x="13" y="50" font-size="31" fill="#222" font-family="Inter" transform="rotate(-5 30 40)" textLength="36">24</text></svg></div>
  <div class="app"><svg viewBox="0 0 64 64"><rect x="2" y="2" width="60" height="60" rx="14" fill="url(#gtom)"/><g stroke="#fff" stroke-width="4.500" stroke-linecap="round"><path d="M32 8v3M32 53v3M8 32h3M53 32h3M15 15l2 2M47 47l2 2M49 15l-2 2M17 47l-2 2"/></g><path d="M24 32l7 7 12-14" fill="none" stroke="#fff" stroke-width="4"/></svg></div>
  <div class="app"><svg viewBox="0 0 64 64"><circle cx="32" cy="32" r="30" fill="#fbfbfb"/><path d="M33 14a18 18 0 1018 18" fill="none" stroke="#4a63dc" stroke-width="6"/><path d="M25 30l8 7 15-19" fill="none" stroke="#fba514" stroke-width="7"/></svg></div>
  <div class="app"><svg viewBox="0 0 64 64"><circle cx="32" cy="32" r="29" fill="url(#gsaf)" stroke="#e6eaee" stroke-width="3"/><circle cx="32" cy="32" r="24" fill="none" stroke="#a9dcf7" stroke-width="4" stroke-dasharray="1 3"/><path d="M49 15L28 28l8 8z" fill="#e73434"/><path d="M15 49l13-21 8 8z" fill="#eceff1"/></svg></div>
  <div class="app on"><svg viewBox="0 0 64 64"><path d="M32 32L6 17A30 30 0 0158 17H32z" fill="#d13a33"/><path d="M6 17a30 30 0 0024 45l14-23-24 0z" fill="#2a9549"/><path d="M58 17a30 30 0 01-28 45l14-24-2-21z" fill="#fbc533"/><circle cx="32" cy="32" r="13.500" fill="#fff"/><circle cx="32" cy="32" r="10.500" fill="#3b72ea"/></svg></div>
  <div class="app on"><svg viewBox="0 0 64 64"><path d="M5 14l5-4 6 6c8-4 12-2 16 0 4-6 6-14 9-16 1 8 12 14 17 24 6 14 1 38-26 38C12 62-1 44 3 28z" fill="url(#gfox)"/><circle cx="31" cy="36" r="12" fill="#6b33d8"/><path d="M17 29c4-8 12-9 17-8l-8 7 5 4-12 6z" fill="#ffa22b"/></svg></div>
  <div class="app on"><svg viewBox="0 0 64 64"><path d="M9 44q-4 10-2 11l5-6zM55 44q4 10 2 11l-5-6z" fill="#111"/><ellipse cx="32" cy="22" rx="18" ry="22" fill="#111"/><ellipse cx="32" cy="42" rx="21" ry="20" fill="#111"/><ellipse cx="32" cy="45" rx="15" ry="16" fill="#fff"/><ellipse cx="27" cy="13" rx="4" ry="6" fill="#fff"/><ellipse cx="37" cy="13" rx="4" ry="6" fill="#fff"/><circle cx="28" cy="14" r="2"/><circle cx="36" cy="14" r="2"/><ellipse cx="30" cy="23" rx="10" ry="3" fill="#f8a60e"/><path d="M11 29q21 9 42 0l-1 8q-20 7-41 0z" fill="#ea1e24"/><path d="M20 35h8v12h-8z" fill="#ea1e24"/><path d="M14 60q8-6 17 0v3H14zM33 60q8-6 17 0v3H33z" fill="#f8a60e"/></svg><span class="appnum">3</span></div>
  <div class="app on"><svg viewBox="0 0 64 64"><path d="M23 7C10 7 1 16 1 27c0 7 3 12 8 16l-2 7 8-4c3 1 16 2 20-2 8-3 11-10 11-17C46 16 36 7 23 7z" fill="#2fd565"/><path d="M45 25c-11 0-19 7-19 16s8 16 19 16c3 0 6-1 8-2l7 3-2-6c4-3 6-7 6-11 0-9-8-16-19-16z" fill="#e9e9e9"/><g fill="#10602c"><circle cx="15" cy="20" r="3"/><circle cx="31" cy="20" r="3"/></g><g fill="#797979"><circle cx="38" cy="35" r="2.500"/><circle cx="51" cy="35" r="2.500"/></g></svg></div>
  <div class="app on"><svg viewBox="0 0 64 64"><circle cx="32" cy="32" r="30" fill="#2d80f6"/><path d="M17 13c8 7 26 8 30 14 1 4-2 8-4 11h5L34 53l3-10h-6l3-6c-6 0-9-3-10-6h5c-6-2-9-5-9-9h5c-5-3-8-6-8-9z" fill="#fff"/></svg></div>
  <div class="app on"><svg viewBox="0 0 64 64"><rect x="2" y="2" width="60" height="60" rx="13" fill="#dc0320"/><path d="M46 12c-8-4-12 1-11 7l3 15c1 9-11 9-11 1 0-6 6-9 12-8 12 1 14 14 6 21-9 8-25 6-30-5-4-11 1-20 11-25" fill="none" stroke="#fff" stroke-width="4.500"/></svg></div>
  <div class="app on"><svg viewBox="0 0 64 64"><path d="M8 5L50 0l12 44-50 18L1 12z" fill="#b3151f"/><path d="M8 7l40-5 10 39-44 14z" fill="#dc2631"/><path d="M46 15l-4-8-17 6-9 13 4 17 12 5 15-8 1-14-13 2v5h5l-2 5-6 2-5-4-2-11 5-8 9-4 3 4z" fill="#fff"/></svg><span class="appnum">3</span></div>
  <div class="app on"><svg viewBox="0 0 64 64"><path d="M24 2h38v32a28 28 0 01-28 28h-6A26 26 0 012 36V24A22 22 0 0124 2z" fill="url(#gblu)"/><path d="M36 14l14 15-9 14-23 4 2-17z" fill="#fff"/><path d="M18 47l32-18-9 14z" fill="#cfe2fb"/></svg></div>
  <div class="app on"><svg viewBox="0 0 64 64"><rect x="2" y="2" width="60" height="60" rx="11" fill="#2b74f3"/><path d="M12 20h5l7 26 8-24h4l7 24 8-26h4M24 20h22l-6 12" fill="none" stroke="#fff" stroke-width="4"/></svg></div>
  <div class="app on"><svg viewBox="0 0 64 64"><path d="M7 8l45-8 9 56-45 6z" fill="#f4f4f2"/><path d="M7 8l45-8 2 12-46 7z" fill="#fbce2c"/><path d="M9 25l46-6M10 31l46-6M11 37l46-6M12 43l46-6M13 49l46-6M14 55l46-6" stroke="#c8c8c6" stroke-width="1.200"/></svg></div>
  <div class="app"><svg viewBox="0 0 64 64"><rect x="2" y="4" width="60" height="55" rx="2" fill="#a7b3bb"/><path d="M2 35h60v22q0 2-2 2H4q-2 0-2-2z" fill="#77797a"/><circle cx="32" cy="32" r="24" fill="#26282a"/><circle cx="32" cy="32" r="19" fill="none" stroke="#a4a6a7" stroke-width="3"/><circle cx="32" cy="32" r="22" fill="none" stroke="#9fa1a2" stroke-width="3" stroke-dasharray="2 2"/><path d="M32 32l17-1M32 32L23 16M32 32l-9 16" stroke="#aaacac" stroke-width="3.500"/><circle cx="32" cy="32" r="5" fill="#bbb"/></svg><span class="appnum">1</span></div>
  <div class="app on"><svg viewBox="0 0 64 64"><rect x="2" y="2" width="60" height="60" rx="4" fill="#3c3c3d"/><path d="M14 21l35-11v14l-19 7 19 5v11L14 55V41l18-6-18-4z" fill="#ff9410"/></svg></div>
  <div class="app on"><svg viewBox="0 0 64 64"><rect x="3" y="6" width="58" height="52" rx="4" fill="#171f22" stroke="#7c898c" stroke-width="2"/><text x="6" y="24" font-size="16" fill="#22e829" font-family="DejaVu Sans Mono">$</text><path d="M18 11h9v15h-9z" fill="#0f651b"/></svg></div>
  <div class="app on"><svg viewBox="0 0 64 64"><path d="M46 2L62 9v46l-16 7L2 22l6-6 38 28V18L8 48l-6-6z" fill="#1172be"/><path d="M46 2L62 9v46l-16 7z" fill="#26a0ee"/></svg></div>
  <div class="app on"><svg viewBox="0 0 64 64"><path d="M2 6l54-8 9 54-52 14z" fill="#dedede"/><path d="M0 7l60-4 3 53-56 4z" fill="#f1f1f1"/><text x="32" y="49" font-size="42" text-anchor="middle" fill="#1c1c1c" font-family="Liberation Serif">T</text></svg></div>
  <div class="app on"><svg viewBox="0 0 64 64"><circle cx="32" cy="32" r="30" fill="#fff"/><g stroke-width="7" stroke-linecap="round"><path d="M17 27h10M27 17v1" stroke="#36c5f0"/><path d="M37 17v10M46 27h1" stroke="#2eb67d"/><path d="M37 37h10M37 46v1" stroke="#ecb22e"/><path d="M27 37v10M17 37h1" stroke="#e01e5a"/></g></svg></div>
  <div class="app on"><svg viewBox="0 0 64 64"><path d="M0 0h58v52H0z" fill="#d8dadd"/><path d="M4 5h50v42H4z" fill="#5b93e5"/><path d="M13 13h40v24H13z" fill="#f2f3f4"/><path d="M30 27h33v34H30z" fill="#2b2b2d" stroke="#bfc3c4" stroke-width="2"/><path d="M8 40v-4a8 8 0 0116 0v4" fill="none" stroke="#b8b8b8" stroke-width="4"/><circle cx="16" cy="49" r="15" fill="#d7d7d7"/><path d="M15 42l5 8-3 8-3-5z" fill="#111"/></svg></div>
  <div class="app on"><svg viewBox="0 0 64 64"><circle cx="32" cy="32" r="30" fill="#0b4af0"/><circle cx="32" cy="28" r="9" fill="none" stroke="#fff" stroke-width="8"/><path d="M28 38h8v14h-8z" fill="#fff"/></svg></div>
  <div class="app"><svg viewBox="0 0 64 64"><path d="M3 36C-2 18 16 0 28 2c6 6 2 18-6 20-20 10-18 40 10 40s30-30 12-38c-6-6-6-22 0-22 10 2 20 20 18 30" fill="none" stroke="url(#gnav)" stroke-width="5"/></svg></div>
  <div class="app on"><svg viewBox="0 0 64 64"><path d="M6 8L22 0l18 8L50 0l4 20 10 28-6 14H28L0 60z" fill="#28c978"/><path d="M42 12L52 0v20zM50 28l14 22-16 14-26-4z" fill="#e7ee3c"/><path d="M50 16l12 12-10 22z" fill="#1fb7e5"/><path d="M13 13h38v38H13z" fill="#0b0b0b"/><text x="15" y="33" font-size="20" font-weight="700" fill="#fff" font-family="Inter" textLength="32">PC</text><path d="M17 44h14" stroke="#fff" stroke-width="3"/></svg></div>
  <div class="app on"><svg viewBox="0 0 64 64"><circle cx="32" cy="32" r="30" fill="#c52f41" stroke="#e9e6e6" stroke-width="2.500"/><path d="M32 15v12L17 42M32 27l5 8-4 16M47 20v12L33 50" fill="none" stroke="#fff" stroke-width="4"/><g fill="#fff"><circle cx="32" cy="14" r="4"/><circle cx="48" cy="18" r="4"/><circle cx="17" cy="43" r="4"/><circle cx="33" cy="51" r="4"/></g></svg></div>
  <div class="app on"><svg viewBox="0 0 64 64"><path d="M4 3l46-3 13 10v48L16 64 3 52z" fill="#fff" stroke="#050505" stroke-width="3.500"/><path d="M4 3l13 13v47L4 51z" fill="#050505"/><path d="M17 16l46-4v48l-46 3z" fill="#fff" stroke="#050505" stroke-width="3.500"/><text x="40" y="54" text-anchor="middle" font-size="44" font-weight="700" fill="#050505" font-family="Liberation Serif">N</text></svg></div>
  <div class="app"><svg viewBox="0 0 64 64"><circle cx="32" cy="32" r="34" fill="#f7f7f7"/><text x="32" y="27" text-anchor="middle" font-size="20" fill="#222" font-family="Noto Sans CJK SC">石</text><text x="32" y="52" text-anchor="middle" font-size="20" fill="#222" font-family="Noto Sans CJK SC">墨</text></svg></div>
  <div class="app"><svg viewBox="0 0 64 64"><path d="M16 10q0-6 7-4l35 20q5 5 0 10L28 56q-10 4-12-6z" fill="#2c8cf5"/><path d="M4 14q3-3 7-1l20 12v17L12 53q-7 1-8-5z" fill="#fb7a1e"/><path d="M11 16q4-4 10 0l23 13q3 3 0 7L20 52q-9 2-9-5z" fill="#73cf1d"/><path d="M19 22l22 10-22 11z" fill="#fff"/></svg></div>
  <div class="app"><svg viewBox="0 0 64 64"><path d="M4-2h14l-8 52-6-30z" fill="#f26a21"/><path d="M10 60q3 8 10 4l38-28V24z" fill="#27a3df"/><path d="M20-2l38 18q5 10 2 20l-20 8z" fill="#32a04a"/><path d="M6 4q2-6 10-3l40 20q5 6 2 14L20 60q-8 2-9-6z" fill="#f8f8f8"/><text x="33" y="40" text-anchor="middle" font-size="31" font-style="italic" font-weight="700" fill="#3c88c9" font-family="Lato">ev</text></svg></div>
  <div class="dsep"><i></i></div>
  <div class="app"><svg viewBox="0 0 64 64"><circle cx="22" cy="22" r="17" fill="#0e78ce"/><circle cx="43" cy="43" r="17" fill="#0b62b9"/><circle cx="32" cy="32" r="26" fill="url(#gsky)"/><text x="32" y="46" text-anchor="middle" font-size="38" font-weight="800" fill="#fff" font-family="Inter">S</text></svg></div>
  <div class="app"><svg viewBox="0 0 64 64"><rect x="0" y="-1" width="64" height="63" rx="11" fill="#a30207"/><path d="M13 48c2-9 36-17 38-8 0 7-19-7-21-23-1-9 6-6 4 2-3 15-17 37-21 29z" fill="none" stroke="#fff" stroke-width="3.600"/></svg></div>
  <div class="dsep"><i class="tallsep"></i></div>
  <div class="app"><svg viewBox="0 0 64 64"><path d="M8 10h50v35H8z" fill="#f3f3f3" stroke="#555" stroke-width="1"/><path d="M10 6h32l12 14v43H10z" fill="#f6f6f6"/><path d="M42 6l12 14-8-3z" fill="#bdbdbd"/><path d="M8 8v54" stroke="#111" stroke-width="4" stroke-dasharray="2 2"/><path d="M18 14h24M16 20h24M20 32h28M17 36h30M17 40h31" stroke="#9b9b9b" stroke-width="1.800"/><path d="M20 46h12" stroke="#ee4b4b" stroke-width="2"/></svg></div>
  <div class="app"><svg><use href="#dirs"/></svg></div>
  <div class="app"><svg><use href="#dirs"/></svg></div>
  <div class="app"><svg viewBox="0 0 64 64"><path d="M8 8h48l-6 50q-2 4-18 4t-18-4z" fill="url(#gtra)"/><ellipse cx="32" cy="8" rx="24" ry="5.500" fill="#a3a2a0" stroke="#dcdcdc" stroke-width="2"/></svg></div>
</div>
</footer>
</div>
</body>
</html>
